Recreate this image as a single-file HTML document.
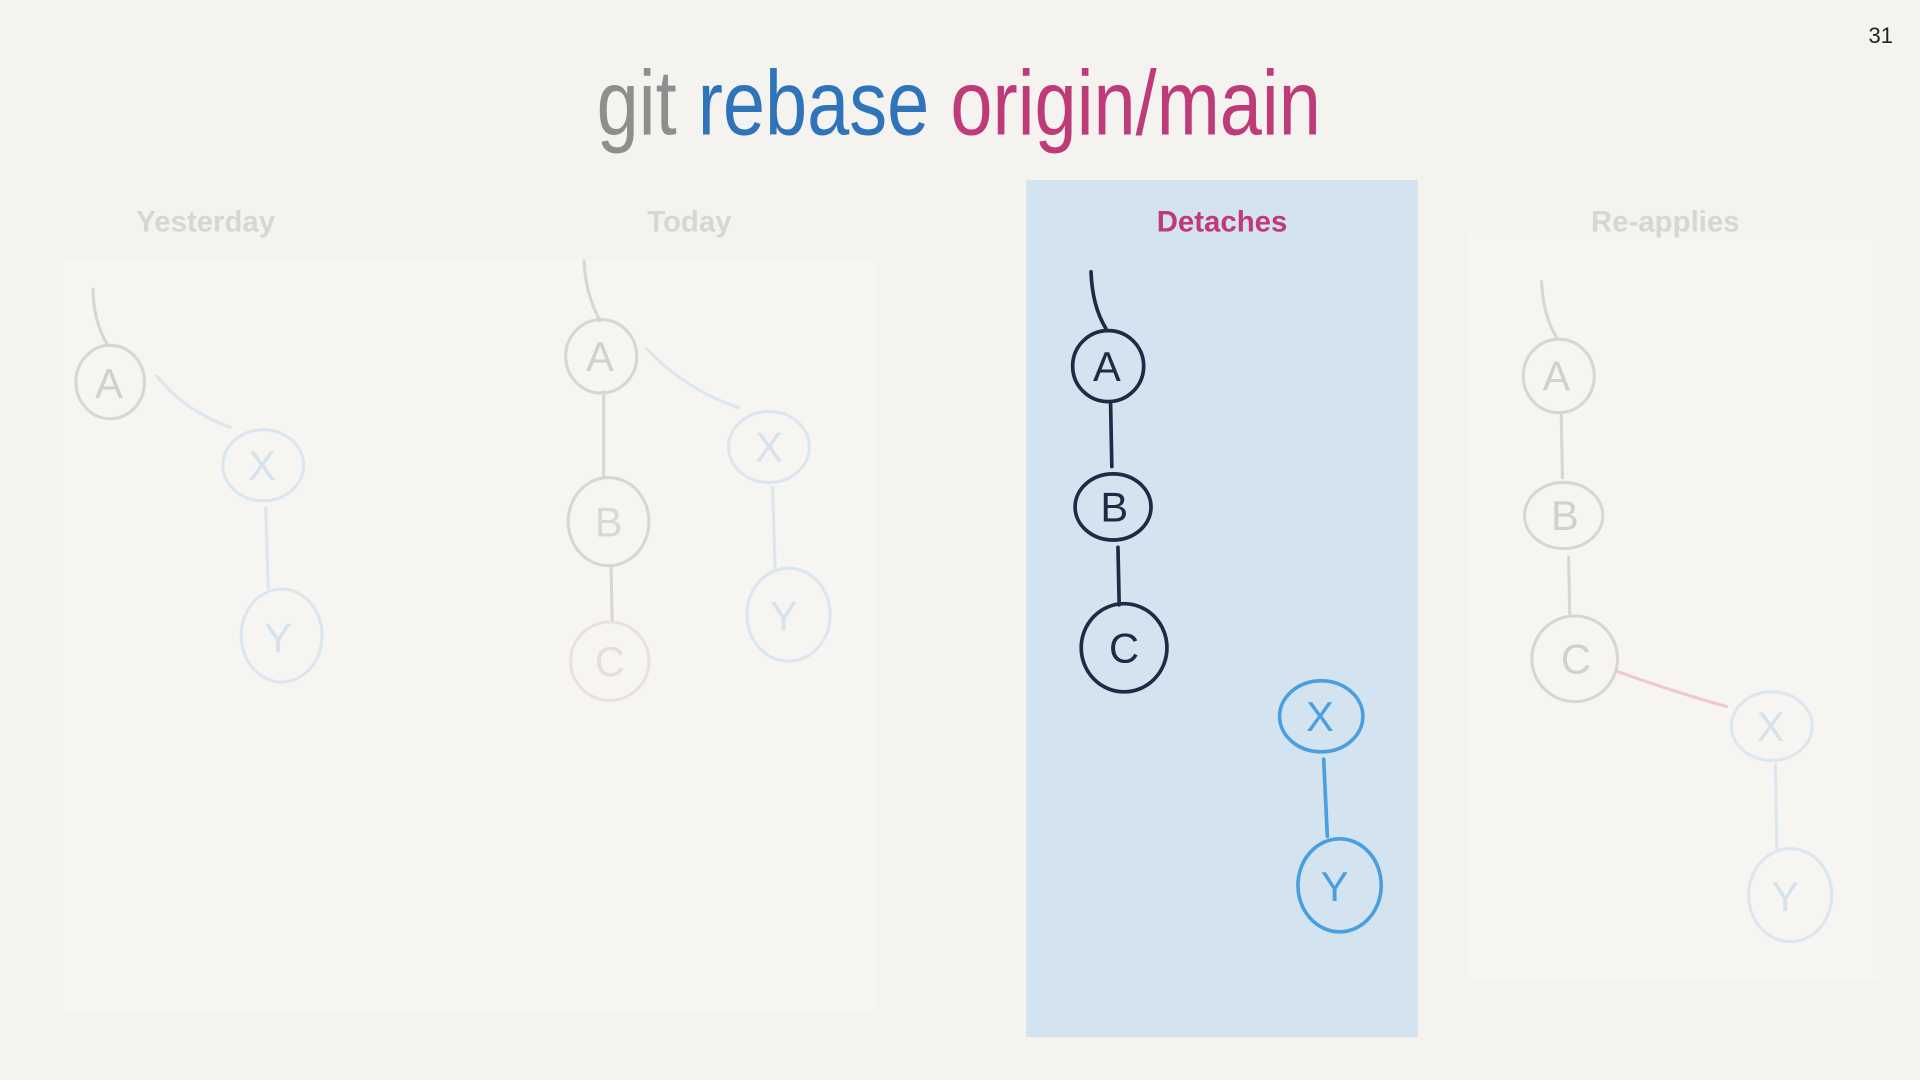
<!DOCTYPE html>
<html><head><meta charset="utf-8"><style>
html,body{margin:0;padding:0;background:#f4f3ef;width:1920px;height:1080px;overflow:hidden}
svg{display:block}
</style></head><body>
<svg width="1920" height="1080" viewBox="0 0 1568 882" xmlns="http://www.w3.org/2000/svg" font-family="Liberation Sans, sans-serif">
<rect width="1568" height="882" fill="#f4f3ef"/>
<rect x="52" y="212" width="663" height="615" fill="#f6f5f2"/>
<rect x="1200" y="190" width="335" height="610" fill="#f6f5f2"/>
<rect x="838" y="147" width="320" height="700" fill="#d3e4f0"/>
<text x="1546" y="35" font-size="18" text-anchor="end" fill="#222">31</text>
<text x="783" y="110" font-size="75" text-anchor="middle" transform="translate(783 0) scale(0.825 1) translate(-783 0)"><tspan fill="#8e8e8e">git</tspan> <tspan fill="#2f73b9">rebase</tspan> <tspan fill="#bf3a78">origin/main</tspan></text>
<g font-size="24" font-weight="bold" text-anchor="middle">
<text x="168" y="189" fill="#d6d6d4">Yesterday</text>
<text x="563" y="189" fill="#d6d6d4">Today</text>
<text x="998" y="189" fill="#bf3a78">Detaches</text>
<text x="1360" y="189" fill="#d6d6d4">Re-applies</text>
</g>
<g fill="none" stroke-width="2.5" stroke-linecap="round">
<g stroke="#d8d6d2"><path d="M76 236 Q76 262 88 282"/><ellipse cx="90" cy="312" rx="28" ry="30"/></g>
<g stroke="#dbe6ee"><path d="M188 349 Q150 335 128 307"/><ellipse cx="215" cy="380" rx="33" ry="29"/><path d="M217 415 L219 480"/><ellipse cx="230" cy="519" rx="33" ry="38"/></g>
<g stroke="#d8d6d2"><path d="M477 213 Q478 240 490 262"/><ellipse cx="491" cy="291" rx="29" ry="30"/><path d="M493 320 L493 390"/><ellipse cx="497" cy="426" rx="33" ry="36"/><path d="M499 462 L500 508"/></g>
<ellipse cx="498" cy="540" rx="32" ry="32" stroke="#e6e3d8"/>
<g stroke="#dbe6ee"><path d="M603 333 Q560 318 528 285"/><ellipse cx="628" cy="365" rx="33" ry="29"/><path d="M631 398 L633 465"/><ellipse cx="644" cy="502" rx="34" ry="38"/></g>
<g stroke="#1e2b45" stroke-width="3"><path d="M891 222 Q892 250 903 268"/><ellipse cx="905" cy="299" rx="29" ry="29"/><path d="M907 330 L908 381"/><ellipse cx="909" cy="414" rx="31" ry="27"/><path d="M913 447 L914 494"/><ellipse cx="918" cy="529" rx="35" ry="36"/></g>
<g stroke="#4a9fe0" stroke-width="3"><ellipse cx="1079" cy="585" rx="34" ry="29"/><path d="M1081 620 L1084 683"/><ellipse cx="1094" cy="723" rx="34" ry="38"/></g>
<g stroke="#d8d6d2"><path d="M1259 230 Q1260 258 1272 277"/><ellipse cx="1273" cy="307" rx="29" ry="30"/><path d="M1275 338 L1276 390"/><ellipse cx="1277" cy="421" rx="32" ry="27"/><path d="M1281 455 L1282 502"/><ellipse cx="1286" cy="538" rx="35" ry="35"/></g>
<path d="M1320 548 Q1370 566 1410 577" stroke="#f0c8d0"/>
<g stroke="#dbe6ee"><ellipse cx="1447" cy="593" rx="33" ry="28"/><path d="M1450 625 L1451 692"/><ellipse cx="1462" cy="731" rx="34" ry="38"/></g>
</g>
<g font-size="34" text-anchor="middle">
<text x="89" y="325" fill="#d2d0cc">A</text><text x="214" y="392" fill="#d6e2ec">X</text><text x="227" y="533" fill="#d6e2ec">Y</text>
<text x="490" y="303" fill="#d2d0cc">A</text><text x="497" y="438" fill="#dad8d2">B</text><text x="498" y="552" fill="#e3e0d5">C</text><text x="628" y="377" fill="#d6e2ec">X</text><text x="640" y="515" fill="#d6e2ec">Y</text>
<text x="904" y="311" fill="#1e2b45">A</text><text x="910" y="426" fill="#1e2b45">B</text><text x="918" y="541" fill="#1e2b45">C</text>
<text x="1078" y="597" fill="#4a9fe0">X</text><text x="1090" y="736" fill="#4a9fe0">Y</text>
<text x="1271" y="319" fill="#d2d0cc">A</text><text x="1278" y="433" fill="#d2d0cc">B</text><text x="1287" y="550" fill="#d2d0cc">C</text><text x="1446" y="605" fill="#d6e2ec">X</text><text x="1458" y="744" fill="#d6e2ec">Y</text>
</g>
</svg>
</body></html>
